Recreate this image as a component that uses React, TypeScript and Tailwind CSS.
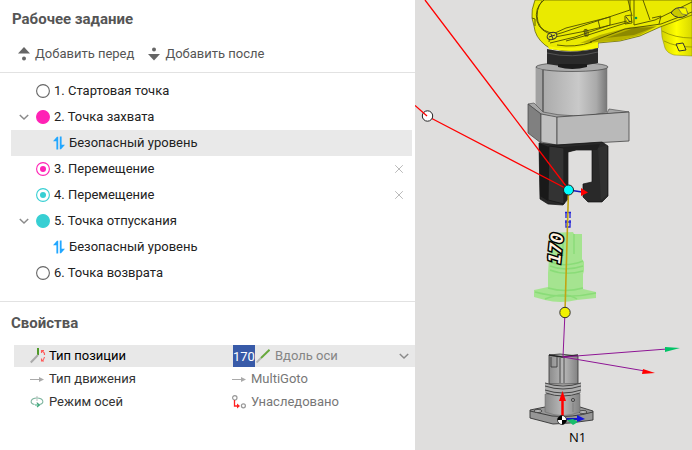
import React from "react";

type Marker = "ring" | "pink" | "pinkDot" | "teal" | "tealDot" | "level";

type Step = {
  text: string;
  marker: Marker;
  open?: boolean;
  removable?: boolean;
  selected?: boolean;
};

const steps: Step[] = [
  { text: "1. Стартовая точка", marker: "ring" },
  { text: "2. Точка захвата", marker: "pink", open: true },
  { text: "Безопасный уровень", marker: "level", selected: true },
  { text: "3. Перемещение", marker: "pinkDot", removable: true },
  { text: "4. Перемещение", marker: "tealDot", removable: true },
  { text: "5. Точка отпускания", marker: "teal", open: true },
  { text: "Безопасный уровень", marker: "level" },
  { text: "6. Точка возврата", marker: "ring" },
];

const PINK = "#ff22b5";
const TEAL = "#37cfd3";

function MarkerIcon({ marker }: { marker: Marker }) {
  if (marker === "level") {
    return (
      <svg className="w-3 h-4 shrink-0" viewBox="0 0 12 16" fill="#22a7ff">
        <path d="M0 6.3 4 1.8H5.2V14.5H3.4V6.3Z" />
        <path d="M6.8 1.5H8.6V9.7H12L8 14.2H6.8Z" />
      </svg>
    );
  }
  const pink = marker === "pink" || marker === "pinkDot";
  const color = marker === "ring" ? "#666" : pink ? PINK : TEAL;
  const solid = marker === "pink" || marker === "teal";
  const dot = marker === "pinkDot" || marker === "tealDot";
  return (
    <svg className="w-3.5 h-3.5 shrink-0" viewBox="0 0 14 14">
      <circle cx="7" cy="7" r="6.4" fill={solid ? color : "#fff"} stroke={color} strokeWidth="1.1" />
      {dot && <circle cx="7" cy="7" r="3" fill={color} />}
    </svg>
  );
}

function Chevron() {
  return (
    <svg className="w-2.5 h-2.5" viewBox="0 0 10 10" fill="none" stroke="#8a8a8a" strokeWidth="1.5">
      <path d="M.8 3 5 7 9.2 3" />
    </svg>
  );
}

function StepRow({ step }: { step: Step }) {
  return (
    <li className={`flex items-center h-[26px] ml-[11px] mr-[3px] pl-2 ${step.selected ? "bg-[#e9e9e9]" : ""}`}>
      <div className="w-[17px] flex">
        {step.open && (
          <button type="button" aria-label="Свернуть" className="flex">
            <Chevron />
          </button>
        )}
      </div>
      <button
        type="button"
        className={`flex items-center flex-1 gap-1 text-left text-[#222] ${step.marker === "level" ? "pl-[17px]" : ""}`}
      >
        <MarkerIcon marker={step.marker} />
        {step.text}
      </button>
      {step.removable && (
        <button type="button" aria-label="Удалить" className="mr-2 flex">
          <svg className="w-2.5 h-2.5" viewBox="0 0 10 10" stroke="#bbb" strokeWidth="1">
            <path d="M1.2 1.2 8.8 8.8M8.8 1.2 1.2 8.8" />
          </svg>
        </button>
      )}
    </li>
  );
}

function Arrow() {
  return (
    <svg className="w-3.5 h-3.5 shrink-0" viewBox="0 0 14 14">
      <path d="M0 7.5H10" stroke="#aaa" />
      <path d="M9 5 14 7.5 9 10Z" fill="#aaa" />
    </svg>
  );
}

function Properties() {
  return (
    <section>
      <h2 className="pl-[11px] pt-[11px] text-[15px] leading-5 font-bold text-[#555]">Свойства</h2>
      <div className="mt-3 ml-3.5">
        <div className="flex items-center h-[22px] pl-4 bg-[#e8e8e8]">
          <svg className="w-4 h-4 shrink-0" viewBox="0 0 16 16" fill="none">
            <path d="M8 0V7" stroke="#4f9a28" strokeWidth="2" />
            <path d="M8 7 .8 14.5" stroke="#aaa" strokeWidth="2" />
            <path d="M11.5 5V2.5H14M12 3Q15 4.500 14.500 7M14.500 9Q14 11.500 12 13M11.500 10.500V13H14" stroke="#ff5a5a" strokeWidth="1.1" />
          </svg>
          <label htmlFor="offset" className="w-[187px] pl-[3px] text-black">Тип позиции</label>
          <input
            id="offset"
            defaultValue="170"
            className="w-[22px] h-[22px] shrink-0 bg-[#385aa8] text-white text-[13px] outline-none"
          />
          <svg className="w-3.5 h-3.5 ml-px shrink-0" viewBox="0 0 14 14" fill="none" strokeWidth="1.9">
            <path d="M.5 13.5 5 9" stroke="#b5b5b5" />
            <path d="M5 9 13.5.8" stroke="#67a83c" />
          </svg>
          <div className="relative flex-1 flex items-center">
            <select aria-label="Тип позиции" className="w-full appearance-none pl-[5px] text-[#858585] outline-none">
              <option>Вдоль оси</option>
              <option>Точка</option>
            </select>
            <span className="absolute right-1.5 pointer-events-none">
              <Chevron />
            </span>
          </div>
        </div>
        <div className="flex items-center h-[23px] pl-4">
          <Arrow />
          <span className="w-[188px] pl-[5px] text-[#333]">Тип движения</span>
          <Arrow />
          <span className="pl-[5px] text-[#777]">MultiGoto</span>
        </div>
        <div className="flex items-center h-[23px] pl-4">
          <svg className="w-3.5 h-3.5 shrink-0" viewBox="0 0 14 14" fill="none">
            <path d="M4.500 9.500C-1 8.500 .5 3 7 3S15 8.500 9.500 9.500" stroke="#7fb59f" strokeWidth="1.1" />
            <path d="M5 10H9M7 8 9.500 10 7 12" stroke="#3fa77c" strokeWidth="1.1" />
            <path d="M7 1V8" stroke="#bbb" strokeDasharray="2 1" />
          </svg>
          <span className="w-[188px] pl-[5px] text-[#333]">Режим осей</span>
          <svg className="w-3.5 h-3.5 shrink-0" viewBox="0 0 14 14" fill="none">
            <circle cx="2.8" cy="2.8" r="2.2" stroke="#999" strokeWidth="1.2" />
            <circle cx="11.4" cy="10.8" r="2" stroke="#999" strokeWidth="1.2" />
            <path d="M2.5 5V11H6" stroke="#f22" strokeWidth="1.3" />
            <path d="M5 8.5 8 11 5 13.5Z" fill="#f22" />
          </svg>
          <span className="pl-[5px] text-[#777]">Унаследовано</span>
        </div>
      </div>
    </section>
  );
}

function Robot() {
  return (
    <g strokeLinejoin="round">
      {/* wrist */}
      <path d="M661 24 662 37 665 48Q667 53 674 55L692 56V12Z" fill="url(#yellow)" stroke="#8a8a00" strokeWidth=".5" />
      <path d="M662 31Q675 38 692 38M664 41Q676 47 692 47" fill="none" stroke="#8f8f00" strokeWidth=".8" />
      <path d="M676 44 683 43 686 50 679 51Z" fill="#f6f600" stroke="#333" />
      {/* arm */}
      <path
        d="M535 0Q531 10 532 18L534 26Q535 37 545 45L548 47Q560 52 580 51L598 48V43L620 41 640 36 660 27 692 15V0Z"
        fill="#eaea00"
        stroke="#555500"
        strokeWidth=".7"
      />
      <path d="M548 46Q572 52 598 42V48Q574 53 549 49Z" fill="#f8f800" />
      <path d="M580 43 600 35 630 27 657 26 640 35 618 41Z" fill="#b8b200" />
      <path d="M606 38 634 28 655 27 634 35Z" fill="#8d8900" />
      <g fill="none" stroke="#4d4d00" strokeWidth=".9">
        <path d="M544 0Q534 8 537 21Q540 32 554 35Q562 33 570 30L630 10V0" />
        <path d="M542 1Q535 10 538 22Q542 33 555 33L566 28 610 17V25L575 37 550 43" />
        <path d="M555 37 586 31 627 21M566 41 588 35 632 21M628 0 632 16M634 0V25L655 20 692 2M643 0 650 20" />
        <path d="M598 20 600 28M590 42 625 29 661 24 692 12M557 45Q575 48 592 42" />
        <path d="M532 18 535 19V26M550 34 549 42M584 30Q589 27 588 36L585 36Z" />
        <path d="M652 18 661 16 659 24M625 16 631 15 632 23 625 24Z" />
      </g>
      <ellipse cx="552" cy="36" rx="5" ry="3.5" fill="#dede16" stroke="#333" transform="rotate(-20 552 36)" />
      <path d="M549 37 555 35M551 34 553 39M586 30V36M626 17 630 22" stroke="#333" />
      <path d="M671 13Q675 6 684 8Q688 11 687 15Q678 21 671 13Z" fill="#c9c900" stroke="#333" />
      <path d="M678 8 686 8 688 15 682 14Z" fill="#f8f800" stroke="#555" strokeWidth=".6" />
      <circle cx="636" cy="18" r="1.3" fill="#009b55" />
      {/* flange */}
      <path d="M536 67V113Q572 122 607 112V68Z" fill="url(#steel)" stroke="#777" strokeWidth=".5" />
      <ellipse cx="572" cy="67" rx="36" ry="4.5" fill="#aaa" stroke="#444" strokeWidth=".7" />
      <path d="M547 49Q572 55 598 48V63Q573 69 547 64Z" fill="#2a2a2a" />
      <path d="M547 53Q572 59 598 52" stroke="#555" fill="none" />
      <path d="M558 64H587V67Q572 71 558 67Z" fill="#1c1c1c" />
      <path d="M536 68V104L543 113V70Z" fill="#a1a1a1" />
      <path d="M543 70V112" stroke="#333" />
      {/* mounting plate */}
      <path d="M528 104 541 114 557 118 629 112 609 109 607 113Q572 119 543 112L534 103Z" fill="#a7a7a7" stroke="#555" strokeWidth=".7" />
      <path d="M528 104 541 114V143L528 133Z" fill="#808080" stroke="#444" strokeWidth=".7" />
      <path d="M541 114 557 117V145L541 142Z" fill="#c1c1c1" stroke="#444" strokeWidth=".7" />
      <path d="M557 117 629 112V141L557 145Z" fill="#b9b9b9" stroke="#444" strokeWidth=".8" />
      {/* gripper */}
      <path
        d="M539 143 557 145 602 142 608 146V196L602 202H588L583 197V184L592 182V150H576L568 152V199L563 205 548 204 540 199Z"
        fill="#292929"
        stroke="#111"
        strokeWidth=".7"
      />
      <path d="M549 146 564 148V204L548 200Z" fill="#333" stroke="#1b1b1b" />
      <path d="M539 143 549 147 548 201 540 196Z" fill="#191919" />
      <path d="M598 148 607 145V195L601 200Z" fill="#303030" />
      <path d="M564 147 600 144 597 150H576L568 152V197L564 203Z" fill="#202020" />
    </g>
  );
}

function Part() {
  return (
    <g strokeLinejoin="round">
      <path d="M530 410 545 407H580L593 411V420L570 423 553 424 530 418Z" fill="#969696" stroke="#333" strokeWidth=".9" />
      <path d="M530 411 552 416Q572 418 593 412" fill="none" stroke="#333" strokeWidth=".9" />
      <ellipse cx="538" cy="411" rx="4" ry="1.5" fill="#bbb" stroke="#333" strokeWidth=".8" />
      <ellipse cx="583" cy="412" rx="4" ry="1.5" fill="#bbb" stroke="#333" strokeWidth=".8" />
      <path d="M545 394H580V412Q563 419 545 412Z" fill="url(#steelDark)" stroke="#666" strokeWidth=".5" />
      <path d="M549 355 560 354 578 356V384H549Z" fill="url(#steelDark)" stroke="#333" strokeWidth=".8" />
      <path d="M551 357V367H557V357M560 358V383M564 356V383" fill="none" stroke="#333" strokeWidth=".8" />
      <path d="M549 355 562 357 578 355" fill="none" stroke="#222" strokeWidth="1.6" />
      <path d="M545 383Q563 388 581 383V393Q563 400 545 393Z" fill="#adadad" />
      <path d="M545 383Q563 389 581 383M545 386Q563 392 581 386M545 390Q563 396 581 390M546 393Q563 399 580 393" fill="none" stroke="#444" />
      <circle cx="573" cy="400" r="1.6" fill="#999" stroke="#333" strokeWidth=".8" />
      <path d="M573 403V412" stroke="#777" strokeWidth=".7" />
    </g>
  );
}

function Ghost() {
  return (
    <g>
      <path
        d="M549 233 573 232 574 234H582V259L584 262V271L583 274V289L596 292V298L577 300Q560 304 545 300L534 297V290L548 287V273L549 258Z"
        fill="#9be582"
        fillOpacity=".85"
      />
      <g fill="none" stroke="#7fd86e" strokeOpacity=".7" strokeWidth="1.4">
        <path d="M550 262Q565 268 583 261M550 266Q565 272 583 266M550 270Q565 276 583 271M574 234V254M563 234V256" />
        <path d="M535 292Q565 300 596 293M548 288Q565 293 583 288M545 299Q565 291 577 299" />
      </g>
    </g>
  );
}

function Scene() {
  return (
    <svg
      className="w-full h-full"
      viewBox="415 0 277 450"
      preserveAspectRatio="xMinYMin slice"
      role="img"
      aria-label="N1"
    >
      <defs>
        <linearGradient id="steel">
          <stop offset="0" stopColor="#a5a5a5" />
          <stop offset=".6" stopColor="#c9c9c9" />
          <stop offset=".85" stopColor="#aaa" />
          <stop offset="1" stopColor="#777" />
        </linearGradient>
        <linearGradient id="steelDark">
          <stop offset="0" stopColor="#8b8b8b" />
          <stop offset=".5" stopColor="#b9b9b9" />
          <stop offset="1" stopColor="#828282" />
        </linearGradient>
        <linearGradient id="yellow">
          <stop offset="0" stopColor="#cfcf00" />
          <stop offset=".5" stopColor="#ffff00" />
          <stop offset="1" stopColor="#d8d800" />
        </linearGradient>
      </defs>
      <Robot />
      <Ghost />
      <Part />

      {/* trajectory */}
      <path d="M425 0 569 190M427 116 569 190" stroke="#ff0000" strokeWidth="1.3" fill="none" />
      <circle cx="427.5" cy="116" r="5.2" fill="#fff" stroke="#222" />
      <path d="M415 105.5 427 116" stroke="#ff0000" strokeWidth="1.3" />

      {/* approach axis */}
      <path d="M565 212.5H571M566 213V218M570 213V218M566 220V227H570V220M565 222H571" stroke="#2020d8" strokeWidth="1.3" fill="none" />
      <path d="M568.5 190 565 312" stroke="#c2a512" strokeWidth="1.6" />
      <path d="M565 312 563 357 667 349M563 357 645 371" stroke="#8e1595" fill="none" />
      <path d="M569 190 582 192" stroke="#1515bb" strokeWidth="1.3" />
      <path d="M581 188 588 192.500 581 196Z" fill="#ff0000" />
      <circle cx="568.5" cy="190" r="5" fill="#00ffff" stroke="#222" />
      <circle cx="565" cy="312.5" r="5.2" fill="#f2f200" stroke="#333" />
      <path d="M665 347 680 348 665 352Z" fill="#00c366" />
      <path d="M643 369 655 373 642 374Z" fill="#ff0000" />

      {/* part origin */}
      <path d="M562.5 418V400" stroke="#f00" strokeWidth="2.5" />
      <path d="M562.5 391 566 401H559Z" fill="#f00" />
      <path d="M565 419H578" stroke="#1515bb" strokeWidth="2" />
      <path d="M577 415 585 419 577 422Z" fill="#1515dd" />
      <path d="M567 420 573 419 578 422 573 425Z" fill="#17bd6b" />
      <circle cx="562" cy="420" r="4.5" fill="#fff" stroke="#000" strokeWidth=".7" />
      <path d="M562 420V415.5A4.5 4.5 0 0 0 557.5 420ZM562 420V424.5A4.5 4.5 0 0 0 566.5 420Z" fill="#000" />

      <text
        x="560"
        y="264"
        transform="rotate(-84 560 264)"
        fontFamily="DejaVu Sans Mono, monospace"
        fontSize="17"
        fontWeight="bold"
        fontStyle="italic"
        fill="#fff1df"
        stroke="#000"
        strokeWidth="3"
        paintOrder="stroke"
      >
        170
      </text>
      <text x="569" y="442" fontFamily="Open Sans, sans-serif" fontSize="13" fill="#000">
        N1
      </text>
    </svg>
  );
}

export default function App() {
  return (
    <main className="flex min-h-screen bg-white font-['Roboto','Liberation_Sans',sans-serif] text-[13px] leading-4">
      <div className="w-3/5">
        <section>
          <h1 className="pl-3 pt-[9px] text-[15px] leading-5 font-bold text-[#555]">Рабочее задание</h1>
          <div className="flex items-center gap-3.5 mt-[17px] pl-[18px] h-4 text-[#555]">
            <button type="button" className="flex items-center gap-[5px]">
              <svg className="w-3 h-3.5" viewBox="0 0 12 14" fill="#666">
                <path d="M6 0 12 6.5H0Z" />
                <circle cx="6" cy="11.5" r="2" />
              </svg>
              Добавить перед
            </button>
            <button type="button" className="flex items-center gap-[5px]">
              <svg className="w-3 h-3.5" viewBox="0 0 12 14" fill="#666">
                <circle cx="6" cy="2.5" r="2" />
                <path d="M0 7H12L6 13.5Z" />
              </svg>
              Добавить после
            </button>
          </div>
        </section>
        <ul className="mt-2.5 pt-[5px] pb-[15px] border-t border-b border-[#e2e2e2]">
          {steps.map((step, i) => (
            <StepRow key={i} step={step} />
          ))}
        </ul>
        <Properties />
      </div>
      <div className="relative w-2/5 bg-[#dfdedd]">
        <div className="absolute inset-0">
          <Scene />
        </div>
      </div>
    </main>
  );
}
